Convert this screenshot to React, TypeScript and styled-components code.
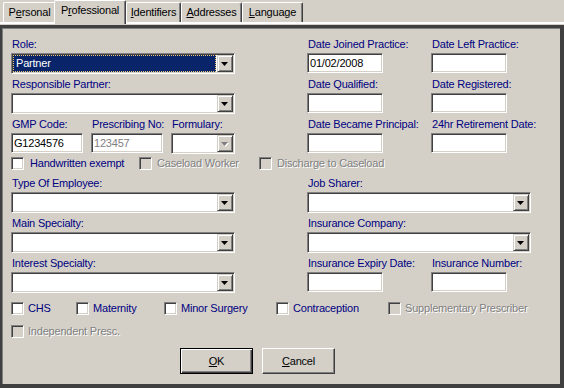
import React from 'react';
import styled, { createGlobalStyle, css } from 'styled-components';

const FACE = '#d4d0c8';
const SHADOW = '#808080';
const DARK = '#404040';
const LABEL = '#000080';

const GlobalStyle = createGlobalStyle`
  html, body {
    margin: 0;
    padding: 0;
    background: ${FACE};
  }
  body {
    font-family: "Liberation Sans", Arial, sans-serif;
    font-size: 11px;
    letter-spacing: -0.2px;
  }
`;

const sunken = css`
  box-sizing: border-box;
  border: 1px solid;
  border-color: ${SHADOW} #fff #fff ${SHADOW};
  box-shadow: inset 1px 1px ${DARK}, inset -1px -1px ${FACE};
`;

const raised = css`
  box-sizing: border-box;
  border: 1px solid;
  border-color: ${FACE} ${DARK} ${DARK} ${FACE};
  box-shadow: inset 1px 1px #fff, inset -1px -1px ${SHADOW};
`;

const Window = styled.div`
  width: 564px;
  height: 388px;
  background: ${FACE};
  display: flex;
  flex-direction: column;
  overflow: hidden;
`;

const TabStrip = styled.div`
  height: 22px;
  display: flex;
  align-items: flex-end;
  padding-left: 3px;
  position: relative;
  z-index: 1;
`;

const Tab = styled.div<{ $active?: boolean; $w: number }>`
  box-sizing: border-box;
  width: ${({ $w }) => $w}px;
  height: 20px;
  padding-top: 3px;
  border-top: 1px solid #fff;
  border-left: 1px solid #fff;
  border-right: 1px solid ${DARK};
  box-shadow: inset -1px 0 ${SHADOW};
  border-radius: 2px 2px 0 0;
  background: ${FACE};
  color: #000;
  line-height: 13px;
  text-align: center;
  white-space: nowrap;

  ${({ $active }) => $active && css`
    height: 24px;
    margin: 0 0 -2px -2px;
    position: relative;
    z-index: 2;
  `}
`;

const Panel = styled.div`
  flex: 1;
  display: flex;
  flex-direction: column;
  border-top: 2px solid #fff;
  padding-top: 1px;
  min-height: 0;
`;

const Sheet = styled.div`
  flex: 1;
  border-style: solid;
  border-color: ${DARK};
  border-width: 3px 4px 4px 2px;
  box-shadow: inset 1px 1px ${SHADOW};
  padding: 9px 0 0 9px;
  display: flex;
  flex-direction: column;
`;

const Section = styled.div`
  display: flex;
  gap: 72px;
`;

const Column = styled.div`
  width: 224px;
  display: flex;
  flex-direction: column;
`;

const FieldRow = styled.div`
  display: flex;
`;

const PairGrid = styled.div`
  display: grid;
  grid-template-columns: 124px 76px;
`;

const Field = styled.div<{ $w?: number }>`
  width: ${({ $w }) => ($w ? `${$w}px` : 'auto')};
  height: 40px;
  display: flex;
  flex-direction: column;
`;

const Label = styled.div`
  color: ${LABEL};
  height: 14px;
  line-height: 14px;
  margin-bottom: 2px;
  padding-left: 1px;
  white-space: nowrap;
`;

const TextBox = styled.div<{ $w: number; $disabled?: boolean }>`
  ${sunken};
  width: ${({ $w }) => $w}px;
  height: 20px;
  background: #fff;
  padding-left: 2px;
  line-height: 18px;
  color: ${({ $disabled }) => ($disabled ? SHADOW : '#000')};
  white-space: nowrap;
`;

const Combo = styled.div<{ $w?: number }>`
  ${sunken};
  width: ${({ $w }) => $w ?? 224}px;
  height: 21px;
  background: #fff;
  padding: 1px;
  display: flex;
`;

const ComboValue = styled.div<{ $selected?: boolean }>`
  flex: 1;
  margin-right: 1px;
  line-height: 17px;
  padding-left: 3px;
  white-space: nowrap;

  ${({ $selected }) => $selected && css`
    background: #0a246a;
    color: #fff;
    outline: 1px dotted #e6c96f;
    outline-offset: -1px;
  `}
`;

const DropButton = styled.div`
  ${raised};
  width: 16px;
  height: 17px;
  background: ${FACE};
  display: flex;
  align-items: center;
  justify-content: center;
  padding-top: 1px;
`;

const CheckRow = styled.div<{ $top?: number; $bottom?: number }>`
  display: flex;
  height: 13px;
  margin-top: ${({ $top }) => $top ?? 0}px;
  margin-bottom: ${({ $bottom }) => $bottom ?? 0}px;
`;

const CheckItem = styled.div<{ $w?: number; $gap: number; $disabled?: boolean }>`
  display: flex;
  align-items: center;
  width: ${({ $w }) => ($w ? `${$w}px` : 'auto')};
  gap: ${({ $gap }) => $gap}px;
  line-height: 13px;
  white-space: nowrap;
  color: ${({ $disabled }) => ($disabled ? SHADOW : LABEL)};
  text-shadow: ${({ $disabled }) => ($disabled ? '1px 1px 0 #fff' : 'none')};
`;

const Box = styled.span<{ $disabled?: boolean }>`
  ${sunken};
  flex: none;
  width: 13px;
  height: 13px;
  background: ${({ $disabled }) => ($disabled ? FACE : '#fff')};
`;

const ButtonRow = styled.div`
  display: flex;
  gap: 9px;
  margin-top: 10px;
  padding-left: 169px;
`;

const Button = styled.button<{ $default?: boolean }>`
  ${raised};
  width: 73px;
  height: 26px;
  padding: 0;
  background: ${FACE};
  color: #000;
  font: inherit;
  letter-spacing: inherit;
  border-color: #fff ${DARK} ${DARK} #fff;
  box-shadow: inset -1px -1px ${SHADOW};

  ${({ $default }) => $default && css`
    border-color: #000;
    box-shadow: inset 1px 1px #fff, inset -1px -1px ${DARK}, inset -2px -2px ${SHADOW};
  `}
`;

const Arrow = ({ disabled }: { disabled?: boolean }) => (
  <svg width="8" height="5" viewBox="0 0 8 5">
    {disabled && <polygon points="1,1 8,1 4.5,5" fill="#fff" />}
    <polygon points="0,0 7,0 3.5,4" fill={disabled ? SHADOW : '#000'} />
  </svg>
);

const ComboBox = ({ value, selected, w, disabled }: { value?: string; selected?: boolean; w?: number; disabled?: boolean }) => (
  <Combo $w={w}>
    <ComboValue $selected={selected}>{value}</ComboValue>
    <DropButton>
      <Arrow disabled={disabled} />
    </DropButton>
  </Combo>
);

const Check = ({ label, w, gap = 4, disabled }: { label: string; w?: number; gap?: number; disabled?: boolean }) => (
  <CheckItem $w={w} $gap={gap} $disabled={disabled}>
    <Box $disabled={disabled} />
    <span>{label}</span>
  </CheckItem>
);

export default function App() {
  return (
    <Window>
      <GlobalStyle />
      <TabStrip>
        <Tab $w={53}>P<u>e</u>rsonal</Tab>
        <Tab $w={72} $active>P<u>r</u>ofessional</Tab>
        <Tab $w={55}><u>I</u>dentifiers</Tab>
        <Tab $w={61}><u>A</u>ddresses</Tab>
        <Tab $w={61}><u>L</u>anguage</Tab>
      </TabStrip>
      <Panel>
        <Sheet>
          <Section>
            <Column>
              <Field>
                <Label>Role:</Label>
                <ComboBox value="Partner" selected />
              </Field>
              <Field>
                <Label>Responsible Partner:</Label>
                <ComboBox />
              </Field>
              <FieldRow>
                <Field $w={80}>
                  <Label>GMP Code:</Label>
                  <TextBox $w={72}>G1234576</TextBox>
                </Field>
                <Field $w={80}>
                  <Label>Prescribing No:</Label>
                  <TextBox $w={72} $disabled>123457</TextBox>
                </Field>
                <Field $w={64}>
                  <Label>Formulary:</Label>
                  <ComboBox w={64} disabled />
                </Field>
              </FieldRow>
            </Column>
            <Column>
              <PairGrid>
                <Field>
                  <Label>Date Joined Practice:</Label>
                  <TextBox $w={76}>01/02/2008</TextBox>
                </Field>
                <Field>
                  <Label>Date Left Practice:</Label>
                  <TextBox $w={76} />
                </Field>
                <Field>
                  <Label>Date Qualified:</Label>
                  <TextBox $w={76} />
                </Field>
                <Field>
                  <Label>Date Registered:</Label>
                  <TextBox $w={76} />
                </Field>
                <Field>
                  <Label>Date Became Principal:</Label>
                  <TextBox $w={76} />
                </Field>
                <Field>
                  <Label>24hr Retirement Date:</Label>
                  <TextBox $w={76} />
                </Field>
              </PairGrid>
            </Column>
          </Section>

          <CheckRow $bottom={6}>
            <Check label="Handwritten exempt" w={128} gap={6} />
            <Check label="Caseload Worker" w={120} gap={5} disabled />
            <Check label="Discharge to Caseload" gap={5} disabled />
          </CheckRow>

          <Section>
            <Column>
              <Field>
                <Label>Type Of Employee:</Label>
                <ComboBox />
              </Field>
              <Field>
                <Label>Main Specialty:</Label>
                <ComboBox />
              </Field>
              <Field>
                <Label>Interest Specialty:</Label>
                <ComboBox />
              </Field>
            </Column>
            <Column>
              <Field>
                <Label>Job Sharer:</Label>
                <ComboBox />
              </Field>
              <Field>
                <Label>Insurance Company:</Label>
                <ComboBox />
              </Field>
              <PairGrid>
                <Field>
                  <Label>Insurance Expiry Date:</Label>
                  <TextBox $w={76} />
                </Field>
                <Field>
                  <Label>Insurance Number:</Label>
                  <TextBox $w={76} />
                </Field>
              </PairGrid>
            </Column>
          </Section>

          <CheckRow $top={6}>
            <Check label="CHS" w={65} />
            <Check label="Maternity" w={88} />
            <Check label="Minor Surgery" w={112} />
            <Check label="Contraception" w={112} />
            <Check label="Supplementary Prescriber" disabled />
          </CheckRow>
          <CheckRow $top={10}>
            <Check label="Independent Presc." disabled />
          </CheckRow>

          <ButtonRow>
            <Button $default><u>O</u>K</Button>
            <Button><u>C</u>ancel</Button>
          </ButtonRow>
        </Sheet>
      </Panel>
    </Window>
  );
}
